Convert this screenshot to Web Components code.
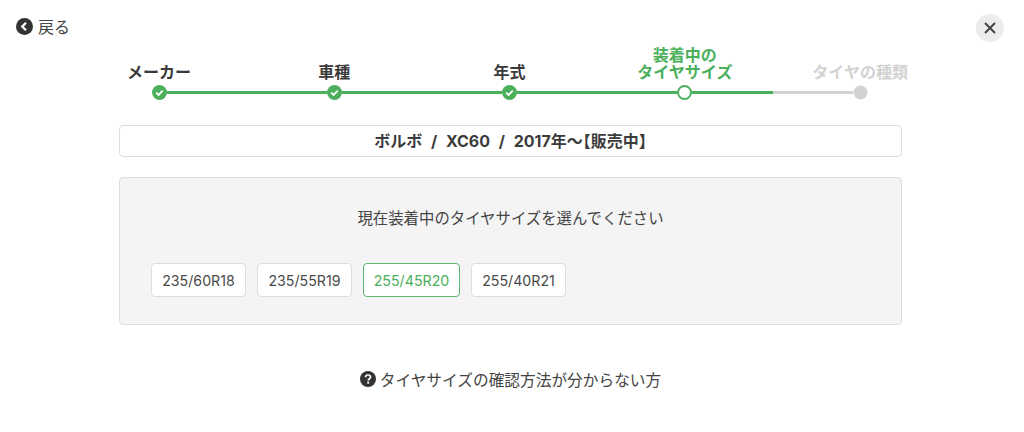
<!DOCTYPE html>
<html lang="ja">
<head>
<meta charset="utf-8">
<title>タイヤサイズ</title>
<style>
  html, body { margin: 0; background: #fff; }
  body {
    height: 432px;
    overflow: hidden;
    font-family: Inter, "Noto Sans CJK JP", sans-serif;
    color: #444;
  }
</style>
</head>
<body>
<tire-page>
  <top-bar slot="top"></top-bar>
  <step-bar slot="steps">
    <step-item state="done">メーカー</step-item>
    <step-item state="done">車種</step-item>
    <step-item state="done">年式</step-item>
    <step-item state="current">装着中の<br>タイヤサイズ</step-item>
    <step-item state="todo">タイヤの種類</step-item>
  </step-bar>
  <title-box slot="title">ボルボ / XC60 / 2017年～<span>【</span>販売中<span>】</span></title-box>
  <size-panel slot="panel" heading="現在装着中のタイヤサイズを選んでください">
    <size-button>235/60R18</size-button>
    <size-button>235/55R19</size-button>
    <size-button selected>255/45R20</size-button>
    <size-button>255/40R21</size-button>
  </size-panel>
  <help-link slot="help">タイヤサイズの確認方法が分からない方</help-link>
</tire-page>

<script>
class TirePage extends HTMLElement {
  constructor() {
    super();
    this.attachShadow({ mode: 'open' });
    this.shadowRoot.innerHTML = `
      <style>
        :host { display: flex; flex-direction: column; height: 432px; }
        .body {
          display: flex;
          flex-direction: column;
          width: 783px;
          margin-left: 119px;
        }
      </style>
      <slot name="top"></slot>
      <slot name="steps"></slot>
      <div class="body">
        <slot name="title"></slot>
        <slot name="panel"></slot>
        <slot name="help"></slot>
      </div>
    `;
  }
}

class TopBar extends HTMLElement {
  constructor() {
    super();
    this.attachShadow({ mode: 'open' });
    this.shadowRoot.innerHTML = `
      <style>
        :host {
          display: flex;
          justify-content: space-between;
          align-items: flex-start;
          height: 28px;
          padding: 14px 20px 0 16px;
        }
        .back {
          display: flex;
          align-items: center;
          gap: 5px;
          height: 24px;
          font-size: 16px;
          color: #444;
          text-decoration: none;
        }
        svg { display: block; }
        .close {
          display: flex;
          align-items: center;
          justify-content: center;
          width: 28px;
          height: 28px;
          border-radius: 50%;
          background: #ececec;
        }
      </style>
      <a class="back" href="#">
        <svg width="17" height="17" viewBox="0 0 17 17">
          <circle cx="8.5" cy="8.5" r="8.5" fill="#333"/>
          <path d="M10 4.8 6.3 8.5l3.7 3.7" fill="none" stroke="#fff" stroke-width="2.3"/>
        </svg>
        <span>戻る</span>
      </a>
      <a class="close" href="#">
        <svg width="12" height="12" viewBox="0 0 12 12">
          <path d="M1 1l10 10M11 1 1 11" fill="none" stroke="#444" stroke-width="2"/>
        </svg>
      </a>
    `;
  }
}

class StepBar extends HTMLElement {
  constructor() {
    super();
    this.attachShadow({ mode: 'open' });
    this.shadowRoot.innerHTML = `
      <style>
        :host {
          display: grid;
          grid-template-columns: repeat(5, 175.25px);
          margin: 5px 0 0 71.5px;
        }
      </style>
      <slot></slot>
    `;
  }
}

const CHECK_DOT = `
  <svg width="15" height="15" viewBox="0 0 15 15">
    <circle cx="7.5" cy="7.5" r="7.5" fill="#4caf5c"/>
    <path d="M4.2 7.7 6.5 10l4.3-4.4" fill="none" stroke="#fff" stroke-width="1.8"/>
  </svg>`;
const RING_DOT = `
  <svg width="15" height="15" viewBox="0 0 15 15">
    <circle cx="7.5" cy="7.5" r="6.5" fill="#fff" stroke="#4caf5c" stroke-width="2"/>
  </svg>`;
const GREY_DOT = `
  <svg width="15" height="15" viewBox="0 0 15 15">
    <circle cx="7.5" cy="7.5" r="7" fill="#d2d2d2"/>
  </svg>`;

class StepItem extends HTMLElement {
  constructor() {
    super();
    this.attachShadow({ mode: 'open' });
    const state = this.getAttribute('state');
    const dot = state === 'done' ? CHECK_DOT : state === 'current' ? RING_DOT : GREY_DOT;
    this.shadowRoot.innerHTML = `
      <style>
        :host {
          display: flex;
          flex-direction: column;
          justify-content: flex-end;
          align-items: center;
          gap: 4px;
          font-size: 16px;
          font-weight: 700;
          line-height: 17px;
          text-align: center;
          color: #3a3a3a;
        }
        :host([state="current"]) { color: #4caf5c; }
        :host([state="todo"]) { color: #d2d2d2; }
        .track {
          display: flex;
          align-items: center;
          align-self: stretch;
          height: 15px;
        }
        .line { flex: 1; height: 3px; }
        .left { background: #4caf5c; }
        .right { background: #4caf5c; }
        :host([state="todo"]) .left { background: #d2d2d2; }
        :host(:first-child) .left { visibility: hidden; }
        :host(:last-child) .right { visibility: hidden; }
        svg { display: block; flex: none; }
      </style>
      <div><slot></slot></div>
      <div class="track">
        <span class="line left"></span>
        ${dot}
        <span class="line right"></span>
      </div>
    `;
  }
}

class TitleBox extends HTMLElement {
  constructor() {
    super();
    this.attachShadow({ mode: 'open' });
    this.shadowRoot.innerHTML = `
      <style>
        :host {
          display: block;
          margin-top: 25px;
          height: 30px;
          border: 1px solid #ddd;
          border-radius: 4px;
          font-size: 16px;
          font-weight: 700;
          line-height: 30px;
          text-align: center;
          color: #3c3c3c;
          word-spacing: 5px;
        }
        ::slotted(span) { font-feature-settings: "halt"; }
      </style>
      <slot></slot>
    `;
  }
}

class SizePanel extends HTMLElement {
  constructor() {
    super();
    this.attachShadow({ mode: 'open' });
    this.shadowRoot.innerHTML = `
      <style>
        :host {
          display: block;
          margin-top: 20px;
          height: 146px;
          background: #f4f4f4;
          border: 1px solid #ddd;
          border-radius: 4px;
        }
        h2 {
          margin: 0;
          padding-top: 31px;
          font-size: 15.4px;
          font-weight: 400;
          line-height: 20px;
          text-align: center;
          color: #444;
        }
        .sizes {
          display: flex;
          gap: 11px;
          margin-top: 34px;
          padding-left: 31px;
        }
      </style>
      <h2>${this.getAttribute('heading')}</h2>
      <div class="sizes"><slot></slot></div>
    `;
  }
}

class SizeButton extends HTMLElement {
  constructor() {
    super();
    this.attachShadow({ mode: 'open' });
    this.shadowRoot.innerHTML = `
      <style>
        :host {
          display: flex;
          align-items: center;
          justify-content: center;
          box-sizing: border-box;
          width: 95px;
          height: 34px;
          background: #fff;
          border: 1px solid #ddd;
          border-radius: 4px;
          font-size: 14.2px;
          color: #4a4a4a;
        }
        :host([selected]) {
          width: 97px;
          border-color: #5cb86b;
          color: #4caf5c;
        }
      </style>
      <slot></slot>
    `;
  }
}

class HelpLink extends HTMLElement {
  constructor() {
    super();
    this.attachShadow({ mode: 'open' });
    this.shadowRoot.innerHTML = `
      <style>
        :host {
          display: flex;
          justify-content: center;
          align-items: center;
          gap: 4px;
          margin-top: 42px;
          height: 24px;
          font-size: 15.7px;
          color: #444;
        }
        svg { display: block; flex: none; }
      </style>
      <svg width="16" height="16" viewBox="0 0 16 16">
        <circle cx="8" cy="8" r="8" fill="#333"/>
        <path d="M5.5 6.2C5.6 4.7 6.6 4 8 4c1.5 0 2.5.8 2.5 2 0 1-.6 1.5-1.3 2-.6.4-.9.7-.9 1.4" fill="none" stroke="#fff" stroke-width="1.7"/>
        <rect x="7.2" y="10.6" width="2" height="2" fill="#fff"/>
      </svg>
      <span><slot></slot></span>
    `;
  }
}

customElements.define('tire-page', TirePage);
customElements.define('top-bar', TopBar);
customElements.define('step-bar', StepBar);
customElements.define('step-item', StepItem);
customElements.define('title-box', TitleBox);
customElements.define('size-panel', SizePanel);
customElements.define('size-button', SizeButton);
customElements.define('help-link', HelpLink);
</script>
</body>
</html>
